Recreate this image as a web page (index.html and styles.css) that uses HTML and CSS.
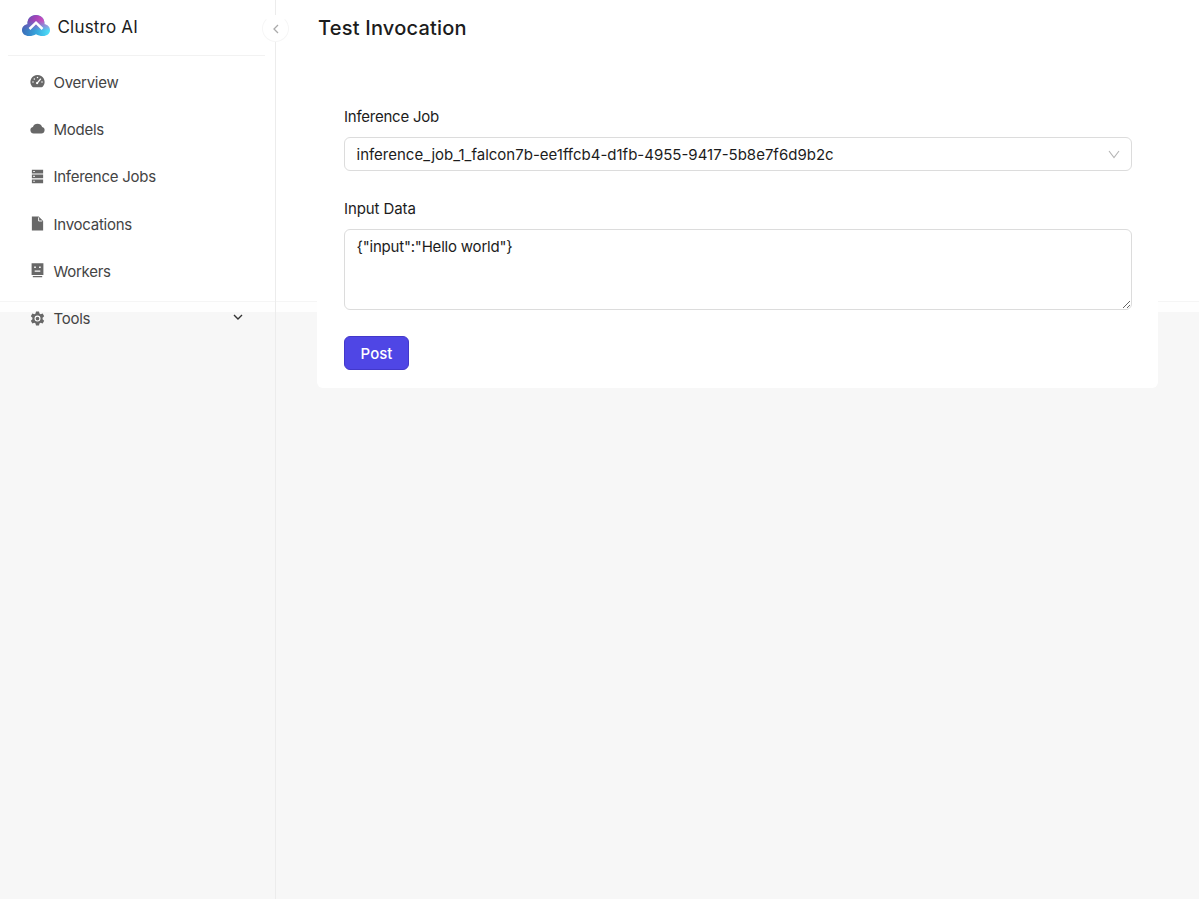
FILE: index.html
```html
<!DOCTYPE html>
<html lang="en">
<head>
<meta charset="utf-8">
<title>Clustro AI</title>
<link rel="stylesheet" href="styles.css">
</head>
<body>
<div class="app">
  <aside class="sidebar">
    <header class="brand">
      <svg class="logo" viewBox="0 0 28 21" width="28" height="21">
        <defs>
          <linearGradient id="base" x1="0" y1="0" x2="1" y2="0"><stop offset="0" stop-color="#3b6cb8"/><stop offset=".5" stop-color="#36a4dc"/><stop offset="1" stop-color="#50e2fa"/></linearGradient>
          <linearGradient id="top" x1="0" y1="0" x2="1" y2=".3"><stop offset="0" stop-color="#4f54ad"/><stop offset=".5" stop-color="#a544b8"/><stop offset="1" stop-color="#ee58c4"/></linearGradient>
          <linearGradient id="fade" x1="0" y1="0" x2="0" y2="1"><stop offset=".25" stop-color="#fff"/><stop offset=".75" stop-color="#000"/></linearGradient>
          <mask id="m"><rect width="28" height="21" fill="url(#fade)"/></mask>
          <path id="cloud" d="M7 21C3 21 0 18.600 0 15.200 0 12 2.300 9.800 5.500 9.300 5.200 3.600 9 0 14 0s8.800 3.600 8.500 9.300c3.200.5 5.500 2.700 5.500 5.900 0 3.400-3 5.800-7 5.800-3 0-5-.8-7-1.800C12 20.200 10 21 7 21Z"/>
        </defs>
        <use href="#cloud" fill="url(#base)"/>
        <use href="#cloud" fill="url(#top)" mask="url(#m)"/>
        <path d="M7.500 14 14 7.700 20.500 14" fill="none" stroke="#fff" stroke-width="2.500"/>
      </svg>
      <span class="brand-name">Clustro AI</span>
      <button class="collapse" aria-label="Collapse"><svg width="8" height="10" viewBox="0 0 8 10"><path d="M6 1 2 5l4 4" fill="none" stroke="#aaa" stroke-width="1.300"/></svg></button>
    </header>
    <nav class="menu">
      <a class="item"><svg class="icon" viewBox="0 0 16 16"><path fill="currentColor" d="M8 1a7.500 7.500 0 0 0-6.300 11.600c.5.900 1 1.400 1.800 1.400h9c.8 0 1.300-.5 1.800-1.400A7.500 7.500 0 0 0 8 1Z"/><path d="m7.600 9.700 3.600-4.200" stroke="#fff" stroke-width="1.500" stroke-linecap="round"/><g fill="#fff"><circle cx="7.600" cy="9.600" r="1.200"/><circle cx="8" cy="3.700" r=".8"/><circle cx="4.600" cy="5.300" r=".8"/><circle cx="3.200" cy="8.600" r=".8"/><circle cx="12.800" cy="8.600" r=".8"/></g></svg><span>Overview</span></a>
      <a class="item"><svg class="icon" viewBox="0 0 16 16"><path fill="currentColor" d="M4 13.200A3.500 3.500 0 0 1 3.100 6.300a5.200 5.200 0 0 1 9.800 0A3.500 3.500 0 0 1 12 13.200Z"/></svg><span>Models</span></a>
      <a class="item"><svg class="icon" viewBox="0 0 16 16"><path fill="currentColor" d="M2 .7h12v4H2zM2 5.900h12v4H2zM2 11.100h12v4H2z"/><path fill="#fff" d="M3.500 2h1.600v1.200H3.500zM3.500 7.300h1.600v1.200H3.500zM3.500 12.500h1.600v1.200H3.500z"/></svg><span>Inference Jobs</span></a>
      <a class="item"><svg class="icon" viewBox="0 0 16 16"><path fill="currentColor" d="M2 .5h7.300L14 5.200v10.300H2z"/><path d="M9.200 1.500v3.800H13" fill="none" stroke="#fff"/></svg><span>Invocations</span></a>
      <a class="item"><svg class="icon" viewBox="0 0 16 16"><path fill="currentColor" d="M1.700.3h12.600v12.400H1.700zM3 13.900h10v1.300H3z"/><path fill="#fff" d="M4.500 3.800h1.700v1.500H4.500zM9.700 3.800h1.700v1.500H9.700zM5 8h6v1.300H5z"/></svg><span>Workers</span></a>
      <a class="item"><svg class="icon" viewBox="0 0 16 16"><path fill="currentColor" d="m6.400.5-.5 2.200-1.200.7-2.200-.7L.9 5.500l1.700 1.600v1.800L.9 10.500l1.600 2.800 2.200-.7 1.200.7.5 2.200h3.200l.5-2.200 1.200-.7 2.200.7 1.600-2.800-1.700-1.600V7.100l1.700-1.600-1.600-2.800-2.200.7-1.200-.7L9.600.5Z"/><circle cx="8" cy="8" r="2.600" fill="none" stroke="#fff" stroke-width="1.200"/></svg><span>Tools</span><svg class="chevron" width="10" height="7" viewBox="0 0 10 7"><path d="m1 1 4 4 4-4" fill="none" stroke="#333" stroke-width="1.400"/></svg></a>
    </nav>
  </aside>
  <main class="content">
    <h1 class="title">Test Invocation</h1>
    <form class="card">
      <label class="label">Inference Job</label>
      <div class="select"><span>inference_job_1_falcon7b-ee1ffcb4-d1fb-4955-9417-5b8e7f6d9b2c</span><svg width="12" height="9" viewBox="0 0 12 9"><path d="m1 1 5 6.500L11 1" fill="none" stroke="#b5b5b5" stroke-width="1.100"/></svg></div>
      <label class="label second">Input Data</label>
      <textarea class="input" spellcheck="false">{"input":"Hello world"}</textarea>
      <button class="post" type="button">Post</button>
    </form>
  </main>
</div>
</body>
</html>
```
FILE: styles.css
```css
* { box-sizing: border-box; }
body {
  margin: 0;
  font: 15px/22px Inter, sans-serif;
  color: #1c1c1c;
  background: linear-gradient(#fff 301px, #f5f5f5 301px, #f5f5f5 302px, #fefefe 302px, #fefefe 312px, #f7f7f7 312px);
}
.app { display: grid; grid-template-columns: 276px 1fr; height: 899px; overflow: hidden; }
.sidebar { border-right: 1px solid #ececec; padding: 0 10px 0 8px; }
.brand { display: flex; align-items: center; position: relative; height: 56px; padding: 0 0 4px 14px; border-bottom: 1px solid #f2f2f2; }
.logo { margin-right: 7.500px; }
.brand-name { font-size: 17px; letter-spacing: 0.200px; padding-top: 2px; }
.collapse {
  position: absolute; right: -24px; top: 15px; width: 27px; height: 27px; padding: 0;
  display: grid; place-items: center; border: 1px solid #f6f6f6; border-top-color: #fff; border-radius: 50%; background: #fff;
}
.menu { display: flex; flex-direction: column; padding: 2px 22px 0; }
.item { display: flex; align-items: center; height: 47.300px; color: #444; letter-spacing: -0.260px; }
.item span { padding-top: 2px; }
.icon { width: 15px; height: 15px; margin-right: 8.500px; color: #686868; }
.chevron { margin: -2px 0 0 auto; }
.content { padding: 0 41px; }
.title { margin: 0; height: 56px; padding: 14px 0 0 1px; font-size: 20px; line-height: 28px; font-weight: 500; letter-spacing: 0.220px; }
.card { display: flex; flex-direction: column; height: 332px; padding: 50px 26px 0 27px; background: #fff; border-radius: 6px; }
.label { height: 31px; flex: none; letter-spacing: -0.240px; }
.select { display: flex; align-items: center; justify-content: space-between; height: 34px; flex: none; padding: 1px 11px 0 11.500px; border: 1px solid #dcdcdc; border-radius: 6px; }
.second { margin-top: 27px; letter-spacing: -0.100px; }
.input { display: block; width: 100%; height: 81px; flex: none; padding: 6px 12px 5px 11.500px; border: 1px solid #dcdcdc; border-radius: 6px; font: inherit; letter-spacing: -0.200px; color: inherit; background: #fff; outline: 0; resize: vertical; }
.post { width: 65px; height: 34px; flex: none; margin-top: 26px; padding: 2px 0 0; border: 1px solid #4338ca; border-radius: 6px; background: #4f46e5; color: #fff; font: 500 15px/22px Inter, sans-serif; }
```
